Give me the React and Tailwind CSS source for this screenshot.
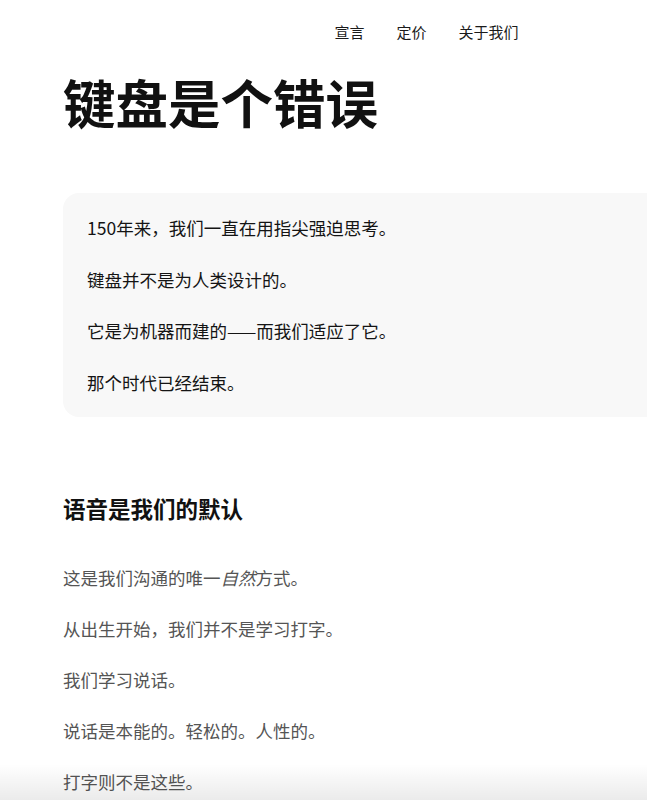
import React from "react";

const font = { fontFamily: '"Noto Sans CJK SC", "Noto Sans", sans-serif' };

export default function App() {
  return (
    <div className="relative min-h-[800px] w-full overflow-hidden bg-white text-[#111]" style={font}>
      <header className="flex gap-[32px] pl-[334.5px] pt-[22px] text-[15px] leading-[20px] text-[#1a1a1a]">
        <a>宣言</a>
        <a>定价</a>
        <a>关于我们</a>
      </header>

      <main className="pl-[63px]">
        <h1 className="mt-[33px] text-[52.5px] font-bold leading-[52px] tracking-normal text-[#111]">
          键盘是个错误
        </h1>

        <section className="mt-[66px] w-[700px] rounded-[16px] bg-[#f8f8f8] pl-[24px] pt-[21px] pb-[20px]">
          <div className="flex flex-col gap-[23.5px] text-[17.5px] leading-[28px] text-[#141414]">
            <p>150年来，我们一直在用指尖强迫思考。</p>
            <p>键盘并不是为人类设计的。</p>
            <p>它是为机器而建的——而我们适应了它。</p>
            <p>那个时代已经结束。</p>
          </div>
        </section>

        <h2 className="mt-[76px] text-[22.5px] font-bold leading-[30px] text-[#111]">语音是我们的默认</h2>

        <div className="mt-[41px] flex flex-col gap-[23.2px] text-[17.5px] leading-[28px] text-[#555]">
          <p>
            这是我们沟通的唯一<em className="italic">自然</em>方式。
          </p>
          <p>从出生开始，我们并不是学习打字。</p>
          <p>我们学习说话。</p>
          <p>说话是本能的。轻松的。人性的。</p>
          <p>打字则不是这些。</p>
        </div>
      </main>

      <div className="pointer-events-none absolute bottom-0 left-0 right-0 h-[36px] bg-gradient-to-b from-black/0 to-black/[0.08]" />
    </div>
  );
}
